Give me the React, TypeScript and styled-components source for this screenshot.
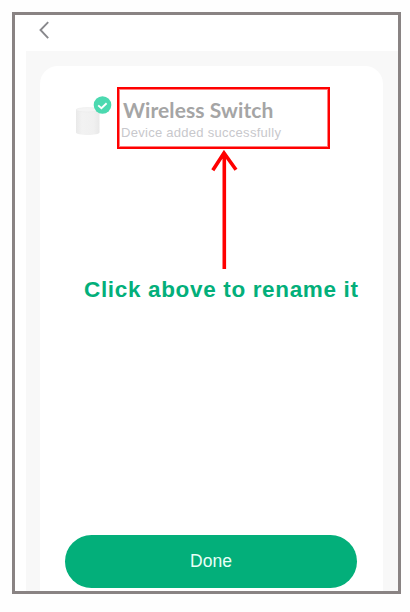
import styled, { createGlobalStyle } from 'styled-components';

const App = () => {
  return (
    <>
      <GlobalStyle />
      <Page>
        <Phone>
          <TopBar>
            <BackButton aria-label="Back">
              <svg width="12" height="20" viewBox="0 0 12 20" fill="none">
                <path d="M10.2 2.2L2.5 10l7.7 8.2" stroke="#88888c" strokeWidth="1.9" />
              </svg>
            </BackButton>
          </TopBar>
          <Content>
            <Card>
              <DeviceRow>
                <DeviceIcon />
                <NameBox>
                  <DeviceName>Wireless Switch</DeviceName>
                  <DeviceStatus>Device added successfully</DeviceStatus>
                </NameBox>
              </DeviceRow>
              <Arrow />
              <Hint>Click above to rename it</Hint>
              <DoneButton>Done</DoneButton>
            </Card>
          </Content>
        </Phone>
      </Page>
    </>
  );
};

const DeviceIcon = () => (
  <DeviceSvg width="38" height="44" viewBox="0 0 38 44" fill="none">
    <defs>
      <linearGradient id="body" x1="0" x2="1" y1="0" y2="0">
        <stop offset="0" stopColor="#e9e9e9" />
        <stop offset="0.25" stopColor="#f2f2f2" />
        <stop offset="0.75" stopColor="#f0f0f0" />
        <stop offset="1" stopColor="#e8e8e8" />
      </linearGradient>
    </defs>
    <path d="M2 13.5v22.8c0 3.6 23.5 3.6 23.5 0V13.5z" fill="url(#body)" />
    <ellipse cx="13.75" cy="13.8" rx="11.7" ry="2.2" fill="#f4f4f4" stroke="#ebebeb" strokeWidth="0.6" />
    <circle cx="28.5" cy="9" r="8.8" fill="#4cd9b0" />
    <path d="M24.2 9.4l3.2 2.8 5.2-5" stroke="#fff" strokeWidth="1.9" />
  </DeviceSvg>
);

const Arrow = () => (
  <ArrowSvg width="28" height="120" viewBox="0 0 28 120" fill="none">
    <path d="M14.3 119V3M2.8 20.3L14 3 26 19.8" stroke="#ff0000" strokeWidth="3.6" />
  </ArrowSvg>
);

const GlobalStyle = createGlobalStyle`
  * {
    box-sizing: border-box;
  }
  body {
    margin: 0;
    background-color: #ffffff;
    font-family: 'Liberation Sans', Arial, sans-serif;
  }
`;
const Page = styled.div`
  width: 410px;
  height: 612px;
  padding: 12px 0 0 12px;
  background-color: #fefefe;
`;
const Phone = styled.div`
  width: 389px;
  height: 582px;
  display: flex;
  flex-direction: column;
  border: 3px solid #898383;
  background-color: #ffffff;
`;
const TopBar = styled.header`
  height: 36px;
  padding: 5px 0 0 23px;
`;
const BackButton = styled.button`
  display: flex;
  padding: 0;
  border: none;
  background-color: inherit;
  cursor: pointer;
`;
const Content = styled.main`
  flex: 1;
  display: flex;
  margin-left: 11px;
  padding: 15px 15px 0 14px;
  background-color: #f8f8f8;
`;
const Card = styled.section`
  flex: 1;
  display: flex;
  flex-direction: column;
  align-items: flex-start;
  padding-top: 21px;
  border-radius: 18px 18px 0 0;
  background-color: #ffffff;
`;
const DeviceRow = styled.div`
  display: flex;
  padding-left: 34px;
`;
const DeviceSvg = styled.svg`
  margin: 9px 5px 0 0;
`;
const NameBox = styled.div`
  width: 213px;
  height: 62px;
  padding: 9px 0 0 2px;
  border: 2px solid #ff0000;
  box-shadow: inset 0 0 0 1px rgba(255, 0, 0, 0.5);
`;
const DeviceName = styled.div`
  padding-left: 2px;
  font-family: Lato, Carlito, sans-serif;
  font-size: 21px;
  font-weight: 700;
  line-height: 24px;
  letter-spacing: 0.08px;
  white-space: nowrap;
  color: #a5a5a5;
`;
const DeviceStatus = styled.div`
  font-size: 13px;
  line-height: 16px;
  letter-spacing: 0.28px;
  margin-top: 3px;
  white-space: nowrap;
  color: #c8c8cc;
`;
const ArrowSvg = styled.svg`
  margin: 1px 0 0 170px;
`;
const Hint = styled.p`
  margin: 6px 0 0 44px;
  font-size: 22.5px;
  font-weight: 700;
  line-height: 27px;
  letter-spacing: 0.66px;
  white-space: nowrap;
  color: #03af7a;
`;
const DoneButton = styled.button`
  width: 292px;
  height: 53px;
  margin: auto 0 3px 25px;
  border: none;
  border-radius: 27px;
  font-family: inherit;
  font-size: 17.5px;
  color: #e9fff7;
  background-color: #03af7a;
  cursor: pointer;
`;

export default App;
